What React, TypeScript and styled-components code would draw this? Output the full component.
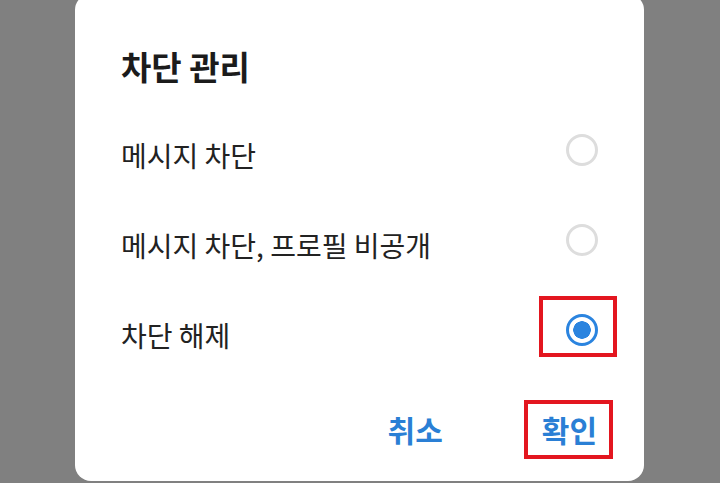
import React, { useState } from "react";
import styled, { createGlobalStyle } from "styled-components";

const GlobalStyle = createGlobalStyle`
  html, body {
    margin: 0;
    padding: 0;
    background: #808080;
    overflow: hidden;
  }
  body {
    font-family: "Noto Sans CJK KR", "Noto Sans", sans-serif;
  }
`;

const options = ["메시지 차단", "메시지 차단, 프로필 비공개", "차단 해제"];

const App: React.FC = () => {
  const [selected, setSelected] = useState(2); // 현재 선택된 옵션

  return (
    <>
      <GlobalStyle />
      <Dialog>
        <Title>차단 관리</Title>
        <OptionList>
          {options.map((label, i) => (
            <OptionRow key={label} onClick={() => setSelected(i)}>
              <OptionLabel>{label}</OptionLabel>
              <Radio $checked={selected === i} $marked={i === 2} />
            </OptionRow>
          ))}
        </OptionList>
        <Footer>
          <ActionButton>취소</ActionButton>
          <ActionButton $marked>확인</ActionButton>
        </Footer>
      </Dialog>
    </>
  );
};

export default App;

const Dialog = styled.div`
  display: flex;
  flex-direction: column;
  box-sizing: border-box;
  width: 569px;
  height: 487px;
  margin: -6px 0 0 75px;
  padding: 52px 47px 0 46px;
  background: #ffffff;
  border-radius: 16px;
`;

const Title = styled.h1`
  margin: 0;
  font-size: 33px;
  font-weight: 700;
  line-height: 40px;
  color: #1b1b1b;
`;

const OptionList = styled.div`
  display: flex;
  flex-direction: column;
  margin-top: 19px;
`;

const OptionRow = styled.div`
  display: flex;
  align-items: center;
  justify-content: space-between;
  height: 90px;
  cursor: pointer;
`;

const OptionLabel = styled.span`
  font-size: 28px;
  line-height: 36px;
  color: #222222;
  margin-top: 9px;
`;

const Radio = styled.span<{ $checked: boolean; $marked?: boolean }>`
  position: relative;
  box-sizing: border-box;
  width: 32px;
  height: 32px;
  margin-right: -1px;
  border-radius: 50%;
  border: 3px solid ${(p) => (p.$checked ? "#2b84df" : "#dddddd")};
  background: ${(p) =>
    p.$checked
      ? "radial-gradient(circle, #2b84df 0 8.5px, transparent 9px)"
      : "transparent"};

  &::after {
    content: "";
    display: ${(p) => (p.$marked ? "block" : "none")};
    position: absolute;
    left: -30px;
    right: -22px;
    top: -21px;
    bottom: -14px;
    border: 4px solid #e3161f;
  }
`;

const Footer = styled.div`
  display: flex;
  justify-content: flex-end;
  gap: 99px;
  margin-top: 34px;
  padding-right: 0;
`;

const ActionButton = styled.button<{ $marked?: boolean }>`
  position: relative;
  padding: 0;
  border: none;
  background: none;
  font-family: inherit;
  font-size: 30px;
  font-weight: 700;
  line-height: 40px;
  color: #2a7fd5;

  &::after {
    content: "";
    display: ${(p) => (p.$marked ? "block" : "none")};
    position: absolute;
    left: -18px;
    right: -16px;
    top: -9px;
    bottom: -10px;
    border: 4px solid #e3161f;
  }
`;
